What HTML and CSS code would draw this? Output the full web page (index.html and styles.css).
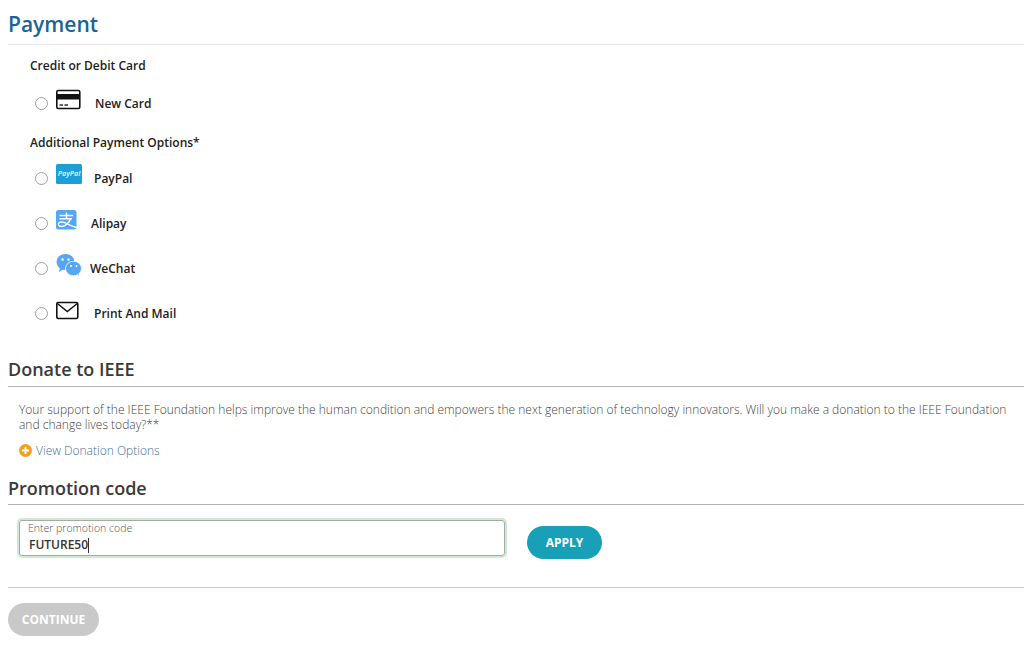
FILE: index.html
```
<!DOCTYPE html>
<html lang="en">
<head>
<meta charset="utf-8">
<title>Payment</title>
<link rel="stylesheet" href="styles.css">
</head>
<body>
<main class="page">
  <h1 class="title">Payment</h1>
  <section class="methods">
    <h2 class="group first">Credit or Debit Card</h2>
    <div class="row row-card">
      <span class="radio"></span>
      <svg class="icon" width="26" height="22" viewBox="0 0 26 22"><rect x=".8" y="1.500" width="23" height="18" rx="1.500" fill="#fff" stroke="#111" stroke-width="1.600"/><rect x=".8" y="5" width="23" height="5.500" fill="#111"/><path d="M3.500 16h3.500M8.500 16h3.500" stroke="#333" stroke-width="1.300"/></svg>
      <span class="label l-card">New Card</span>
    </div>
    <h2 class="group second">Additional Payment Options*</h2>
    <div class="row row-first">
      <span class="radio"></span>
      <svg class="icon" width="26" height="22" viewBox="0 0 26 22"><rect x="0" y="0" width="26" height="20" rx="1.500" fill="#1c9fd8"/><text x="13" y="11.500" text-anchor="middle" class="pp">PayPal</text></svg>
      <span class="label l-paypal">PayPal</span>
    </div>
    <div class="row">
      <span class="radio"></span>
      <svg class="icon" width="26" height="22" viewBox="0 0 26 22"><rect x="0" y="1" width="20.500" height="19.500" rx="2.500" fill="#57a5f5"/><path d="M3.500 6.500h13.500M10.500 3.500v6M3.500 9.800h12.500M14.500 9.800c-1 3.700-5 7.700-9 7.700-2.500 0-3.500-1.500-3-3 .7-2 5-2 8 0 3 1.800 6.500 3 10 4" fill="none" stroke="#fff" stroke-width="1.400"/></svg>
      <span class="label l-alipay">Alipay</span>
    </div>
    <div class="row">
      <span class="radio"></span>
      <svg class="icon" width="26" height="22" viewBox="0 0 26 22"><ellipse cx="9.500" cy="8" rx="9" ry="8" fill="#57a5f5"/><path d="M4 13l-1 5 5-3z" fill="#57a5f5"/><path d="M21 19.500l2 2.500-.2-4z" fill="#57a5f5"/><ellipse cx="17.500" cy="14.500" rx="8" ry="7.300" fill="#57a5f5" stroke="#fff" stroke-width=".8"/><circle cx="6.500" cy="5.500" r="1.200" fill="#fff"/><circle cx="12.500" cy="5.500" r="1.200" fill="#fff"/><circle cx="15" cy="12" r="1" fill="#fff"/><circle cx="20.500" cy="12" r="1" fill="#fff"/></svg>
      <span class="label l-wechat">WeChat</span>
    </div>
    <div class="row">
      <span class="radio"></span>
      <svg class="icon" width="26" height="22" viewBox="0 0 26 22"><rect x=".8" y="3.500" width="21" height="16" rx="1.500" fill="#fff" stroke="#111" stroke-width="1.600"/><path d="M1.300 4.500l10 8 10-8" fill="none" stroke="#111" stroke-width="1.500"/></svg>
      <span class="label l-mail">Print And Mail</span>
    </div>
  </section>

  <h2 class="section donate">Donate to IEEE</h2>
  <div class="donate-body">
    <p class="copy">Your support of the IEEE Foundation helps improve the human condition and empowers the next generation of technology innovators. Will you make a donation to the IEEE Foundation and change lives today?**</p>
    <a class="more" href="#">
      <svg width="13" height="13" viewBox="0 0 13 13"><circle cx="6.500" cy="6.500" r="6.500" fill="#f6a019"/><path d="M6.500 3v7M3 6.500h7" stroke="#fff" stroke-width="2"/></svg>
      <span>View Donation Options</span>
    </a>
  </div>

  <h2 class="section promo">Promotion code</h2>
  <div class="promo-row">
    <div class="field">
      <span class="field-label">Enter promotion code</span>
      <span class="field-value">FUTURE50<i class="caret"></i></span>
    </div>
    <button class="btn apply" type="button">APPLY</button>
  </div>
  <hr class="rule">
  <button class="btn continue" type="button">CONTINUE</button>
</main>
</body>
</html>
```
FILE: styles.css
```
* { box-sizing: border-box; }
html, body { margin: 0; padding: 0; background: #fff; }
body { font-family: "Open Sans", "Liberation Sans", sans-serif; color: #222; overflow: hidden; }
.page { width: 1024px; height: 646px; padding: 7px 0 0 8px; }
.title { margin: 0; height: 38px; font-size: 21px; line-height: 34px; font-weight: 600; color: #1a6496; border-bottom: 1px solid #e6e6e6; }
.methods { padding-left: 22px; }
.group { margin: 0; font-size: 12px; line-height: 18px; font-weight: 600; color: #222; }
.group.first { padding-top: 12px; height: 30px; }
.group.second { margin-top: 20px; }
.row { display: flex; align-items: center; height: 24px; margin-top: 21px; margin-left: 5px; }
.row-card { margin-top: 15px; }
.row-first { margin-top: 13px; }
.radio { width: 13px; height: 13px; border: 1.500px solid #a0a0a0; border-radius: 50%; background: #fff; flex: none; margin-top: 2px; }
.icon { margin-left: 8px; margin-top: -4px; flex: none; overflow: visible; }
.label { font-size: 12px; font-weight: 600; color: #222; margin-top: 2px; }
.l-card { margin-left: 13px; }
.l-paypal { margin-left: 12px; }
.l-alipay { margin-left: 9px; }
.l-wechat { margin-left: 8px; }
.l-mail { margin-left: 12px; }
.pp { font-family: "Open Sans", sans-serif; font-size: 7px; font-style: italic; font-weight: 700; fill: #cfeaf8; }
.section { margin: 0; font-size: 18px; line-height: 25px; font-weight: 600; color: #3a3a3a; width: 1016px; border-bottom: 1px solid #b5b5b5; }
.donate { margin-top: 33px; height: 30px; }
.donate-body { padding-left: 11px; }
.copy { margin: 15px 0 0; font-size: 12px; line-height: 15px; font-weight: 300; color: #444; width: 1000px; }
.more { display: flex; align-items: center; gap: 4px; margin-top: 10px; height: 16px; font-size: 12px; font-weight: 300; color: #3f6f9f; text-decoration: none; }
.promo { margin-top: 18px; height: 29px; }
.promo-row { display: flex; align-items: flex-start; margin: 15px 0 0 11px; }
.field { width: 486px; height: 36px; padding: 0 9px; border: 1px solid #a8a8a8; border-radius: 3px; box-shadow: 0 0 0 2px #cdeccf; display: flex; flex-direction: column; }
.field-label { font-size: 10.500px; line-height: 14px; font-weight: 300; color: #555; margin-left: -1px; }
.field-value { font-size: 12px; line-height: 18px; font-weight: 600; color: #333; display: flex; align-items: center; margin-top: 1px; }
.caret { width: 1px; height: 15px; background: #333; }
.btn { border: 0; border-radius: 17px; font-family: inherit; font-weight: 700; font-size: 12px; color: #fff; height: 33px; padding: 0; }
.apply { width: 75px; margin: 6px 0 0 22px; background: #18a0b8; }
.rule { width: 1016px; margin: 28px 0 0; border: 0; border-top: 1px solid #c8c8c8; }
.continue { display: block; width: 91px; margin-top: 15px; background: #c9c9c9; }
```
